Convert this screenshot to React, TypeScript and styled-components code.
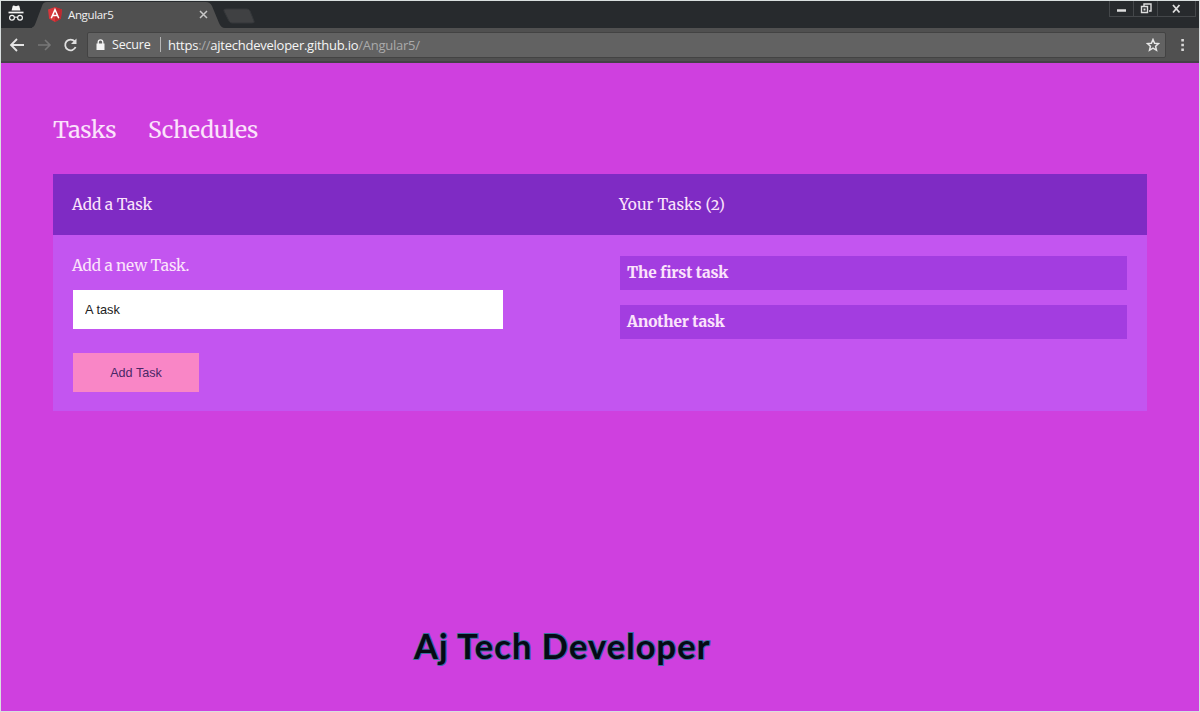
import React from "react";
import styled, { createGlobalStyle } from "styled-components";

const GlobalStyle = createGlobalStyle`
  * { box-sizing: border-box; }
  body { margin: 0; background: #e4dfe8; }
`;

const serif = `"Merriweather", "DejaVu Serif Condensed", "DejaVu Serif", serif`;
const chromeFont = `"Segoe UI", "Open Sans", "Noto Sans", sans-serif`;

const Window = styled.div`
  width: 1200px;
  height: 712px;
  padding: 1px;
  display: flex;
  flex-direction: column;
  overflow: hidden;
  background: #d9dfdf;
`;

const TabStrip = styled.div`
  height: 27px;
  flex: none;
  display: flex;
  background: #272a2d;
`;

const Incognito = styled.svg`
  flex: none;
  margin: 4px 0 0 6px;
`;

const TabArea = styled.div`
  display: grid;
  flex: none;
  width: 225px;
  margin-left: 7px;
  > * { grid-area: 1 / 1; }
`;

const TabContent = styled.div`
  display: flex;
  align-items: center;
  padding: 0 49px 0 16px;
  height: 27px;
  font: 11.5px/27px ${chromeFont};
  color: #f0f0f0;
  svg { flex: none; }
`;

const TabTitle = styled.span`
  flex: 1;
  margin-left: 6px;
  letter-spacing: -0.35px;
`;

const WindowControls = styled.div`
  display: flex;
  margin: 0 3px 0 auto;
  height: 16px;
  border: 1px solid #44474a;
  border-top: 0;
`;

const ControlButton = styled.div<{ $width: number }>`
  width: ${(p) => p.$width}px;
  display: flex;
  justify-content: center;
  & + & { border-left: 1px solid #44474a; }
`;

const Toolbar = styled.div`
  height: 35px;
  flex: none;
  display: flex;
  align-items: center;
  background: #505050;
  border-bottom: 2px solid #454148;
  padding: 0 8px 0 8px;
`;

const NavIcon = styled.svg<{ $gap: number }>`
  flex: none;
  margin-right: ${(p) => p.$gap}px;
`;

const MenuIcon = styled.svg`
  flex: none;
  margin-left: 8px;
`;

const AddressBar = styled.div`
  width: 1079px;
  height: 26px;
  display: flex;
  align-items: center;
  padding: 0 5px 0 8px;
  background: #626262;
  border: 1px solid #434343;
  border-radius: 2px;
  font: 13px/22px ${chromeFont};
  color: #f5f5f5;
`;

const Secure = styled.span`
  width: 48px;
  margin-left: 7px;
  padding-top: 1px;
  font-size: 12.5px;
  letter-spacing: -0.2px;
`;

const Divider = styled.span`
  width: 1px;
  height: 15px;
  background: #b5b5b5;
  margin-right: 7px;
`;

const Url = styled.span`
  flex: 1;
  letter-spacing: -0.25px;
`;

const Dim = styled.span`
  color: #aaaaaa;
`;

const Page = styled.main`
  flex: 1;
  display: flex;
  flex-direction: column;
  padding: 47px 52px 0;
  background: #cf40df;
  font-family: ${serif};
  color: #fbe3fb;
`;

const Nav = styled.nav`
  display: flex;
  height: 64px;
  font-size: 23px;
  line-height: 40px;
`;

const NavLink = styled.a<{ $width: number; $spacing: number }>`
  width: ${(p) => p.$width}px;
  white-space: nowrap;
  letter-spacing: ${(p) => p.$spacing}px;
`;

const Columns = styled.div`
  display: grid;
  grid-template-columns: 1fr 1fr;
`;

const PanelHeader = styled(Columns)`
  height: 61px;
  background: #7f2bc4;
  line-height: 62px;
  font-variant-numeric: oldstyle-nums;
`;

const PanelBody = styled(Columns)`
  height: 176px;
  background: #c355f0;
`;

const Column = styled.section`
  padding: 0 20px 0 19px;
`;

const Label = styled.span<{ $spacing: number }>`
  display: block;
  font-size: 15.4px;
  letter-spacing: ${(p) => p.$spacing}px;
  white-space: nowrap;
`;

const Prompt = styled(Label)`
  padding-top: 18px;
  line-height: 26px;
`;

const TaskInput = styled.input`
  display: block;
  width: 430px;
  height: 39px;
  margin: 11px 0 24px 1px;
  padding: 0 12px;
  border: 0;
  border-radius: 0;
  background: #fff;
  color: #222;
  font: 12.8px "Liberation Sans", Arial, sans-serif;
  outline: 0;
`;

const AddButton = styled.button`
  display: block;
  width: 126px;
  height: 39px;
  margin-left: 1px;
  padding: 1px 0 0;
  border: 0;
  background: #f986c6;
  color: #4a2767;
  font: 12.6px "Liberation Sans", Arial, sans-serif;
`;

const TaskList = styled.div`
  padding: 21px 0 0 1px;
  display: flex;
  flex-direction: column;
  gap: 15px;
`;

const Task = styled.div<{ $spacing: number }>`
  height: 34px;
  padding-left: 7px;
  background: #a33de0;
  font-size: 15.4px;
  font-weight: 800;
  line-height: 34px;
  letter-spacing: ${(p) => p.$spacing}px;
`;

const Signature = styled.h1`
  margin: 211px 0 0 361px;
  font: 700 34.5px/48px Lato, sans-serif;
  letter-spacing: 1.05px;
  color: #050914;
  white-space: nowrap;
  -webkit-text-stroke: 1.8px #3c6fa0;
  paint-order: stroke fill;
`;

const AngularLogo = () => (
  <svg width="14" height="15" viewBox="0 0 13 14">
    <path d="M6.5 0 13 2.3 12 11 6.5 14 1 11 0 2.3Z" fill="#d9363b" />
    <path d="M6.5 0 13 2.3 12 11 6.5 14Z" fill="#bd2a30" />
    <path d="M3 10.5 6.5 2.5 10 10.5M4.4 8H8.6" fill="none" stroke="#fff" strokeWidth="1.4" />
  </svg>
);

export default function App() {
  return (
    <Window>
      <GlobalStyle />
      <TabStrip>
        <Incognito width="18" height="18" viewBox="0 0 18 18">
          <path d="M4.6 5.4 5.7 1.1Q6 .3 6.9.6L9 1.2l2.1-.6q.9-.3 1.2.5l1.1 4.3Z" fill="#f4f4f4" />
          <path d="M1.5 7.5h15" stroke="#f4f4f4" strokeWidth="1.7" />
          <g fill="none" stroke="#f4f4f4" strokeWidth="1.2">
            <circle cx="5" cy="12.8" r="2.4" />
            <circle cx="13" cy="12.8" r="2.4" />
            <path d="M7.4 12.5Q9 11.5 10.6 12.5" />
          </g>
        </Incognito>
        <TabArea>
          <svg width="225" height="27" viewBox="0 0 225 27">
            <path d="M-1 27C2 26 3 24 4 21L10 5Q11 1 15 1H174Q178 1 180 5L187 22Q189 27 193 27Z" fill="#505050" />
            <path d="M194 8H215Q217 8 218 10L222 20Q223 22 220 22H200Q198 22 197 20L192 10Q191 8 194 8Z" fill="#404143" stroke="#34373a" />
          </svg>
          <TabContent>
            <AngularLogo />
            <TabTitle>Angular5</TabTitle>
            <svg width="9" height="9" viewBox="0 0 9 9">
              <path d="m1 1 7 7M8 1 1 8" stroke="#c8c8c8" strokeWidth="1.5" />
            </svg>
          </TabContent>
        </TabArea>
        <WindowControls>
          <ControlButton $width={23}>
            <svg width="10" height="15" viewBox="0 0 10 15">
              <path d="M0 9.5h9" stroke="#dedede" strokeWidth="2.5" />
            </svg>
          </ControlButton>
          <ControlButton $width={24}>
            <svg width="12" height="15" viewBox="0 0 12 15">
              <path d="M4 5V3h7v7H9M1.5 5.5h6v6h-6Z" fill="none" stroke="#dedede" strokeWidth="1.4" />
              <path d="M3.5 7.5h2v2h-2Z" fill="#dedede" />
            </svg>
          </ControlButton>
          <ControlButton $width={38}>
            <svg width="9" height="15" viewBox="0 0 9 15">
              <path d="m1 4 6.5 7.5M7.5 4l-6.5 7.5" stroke="#dedede" strokeWidth="1.8" />
            </svg>
          </ControlButton>
        </WindowControls>
      </TabStrip>
      <Toolbar>
        <NavIcon $gap={12} width="16" height="16" viewBox="0 0 16 16">
          <path d="M15 8H2.5M8 2 2 8l6 6" fill="none" stroke="#e5e5e5" strokeWidth="1.8" />
        </NavIcon>
        <NavIcon $gap={11} width="15" height="16" viewBox="0 0 15 16">
          <path d="M1 8h12M8 3l5 5-5 5" fill="none" stroke="#777" strokeWidth="1.6" />
        </NavIcon>
        <NavIcon $gap={9} width="15" height="16" viewBox="0 0 15 16">
          <path d="M12.6 10A5.4 5.4 0 1 1 11.7 4.4" fill="none" stroke="#dfdfdf" strokeWidth="1.8" />
          <path d="M13.5 1.5v5.5H8Z" fill="#dfdfdf" />
        </NavIcon>
        <AddressBar>
          <svg width="9" height="12" viewBox="0 0 9 12">
            <path d="M.5 4.5h8V11h-8Z" fill="#f4f4f4" />
            <path d="M2.2 5V3.2a2.3 2.3 0 0 1 4.6 0V5" fill="none" stroke="#f4f4f4" strokeWidth="1.3" />
          </svg>
          <Secure>Secure</Secure>
          <Divider />
          <Url>
            https<Dim>://</Dim>ajtechdeveloper.github.io<Dim>/Angular5/</Dim>
          </Url>
          <svg width="14" height="14" viewBox="0 0 14 14">
            <path d="m7 1.5 1.6 3.7 4 .4-3 2.7.9 4L7 10.2l-3.5 2.1.9-4-3-2.7 4-.4Z" fill="none" stroke="#e8e8e8" strokeWidth="1.5" />
          </svg>
        </AddressBar>
        <MenuIcon width="17" height="14" viewBox="0 0 17 14">
          <path d="M7.3 1h2.6v2.6H7.3ZM7.3 5.7h2.6v2.6H7.3ZM7.3 10.4h2.6v2.6H7.3Z" fill="#d9d9d9" />
        </MenuIcon>
      </Toolbar>
      <Page>
        <Nav>
          <NavLink $width={95} $spacing={-0.35}>Tasks</NavLink>
          <NavLink $width={115} $spacing={-0.15}>Schedules</NavLink>
        </Nav>
        <PanelHeader>
          <Column><Label $spacing={-0.05}>Add a Task</Label></Column>
          <Column><Label $spacing={0.15}>Your Tasks (2)</Label></Column>
        </PanelHeader>
        <PanelBody>
          <Column>
            <Prompt $spacing={-0.15}>Add a new Task.</Prompt>
            <TaskInput defaultValue="A task" />
            <AddButton>Add Task</AddButton>
          </Column>
          <Column>
            <TaskList>
              <Task $spacing={-0.15}>The first task</Task>
              <Task $spacing={-0.15}>Another task</Task>
            </TaskList>
          </Column>
        </PanelBody>
        <Signature>Aj Tech Developer</Signature>
      </Page>
    </Window>
  );
}
